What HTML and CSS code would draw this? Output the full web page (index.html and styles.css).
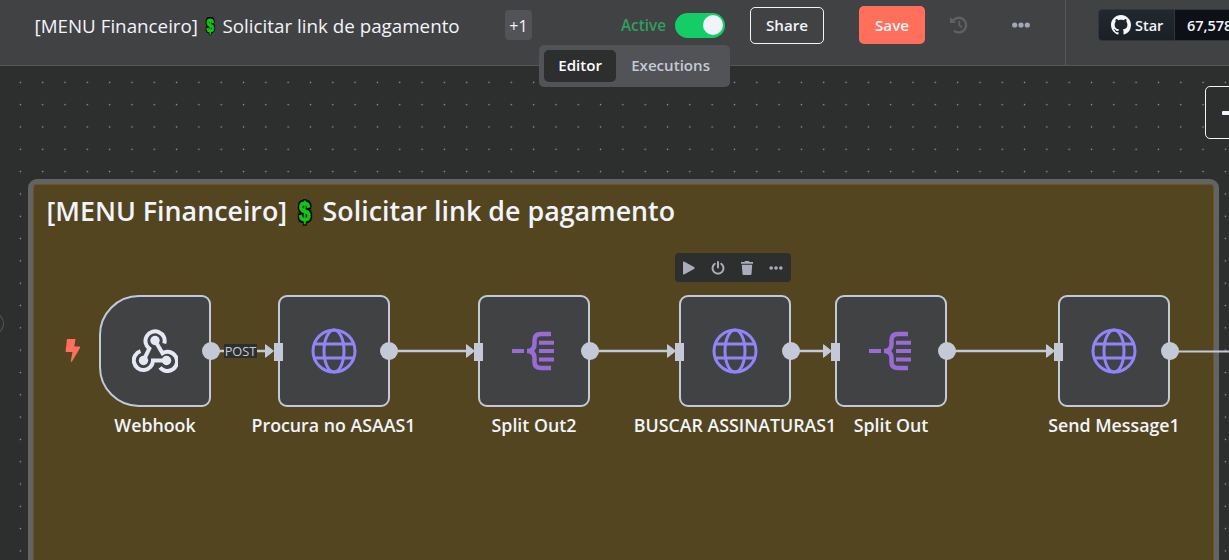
FILE: index.html
```html
<!DOCTYPE html>
<html lang="pt-BR">
<head>
<meta charset="utf-8">
<title>[MENU Financeiro] Solicitar link de pagamento</title>
<link rel="stylesheet" href="styles.css">
</head>
<body>
<svg class="defs" width="0" height="0" aria-hidden="true">
  <symbol id="globe" viewBox="0 0 46 46"><g fill="none" stroke="#9184f7" stroke-width="3"><circle cx="23" cy="23" r="21"/><ellipse cx="23" cy="23" rx="10" ry="21"/><path d="M3.5 16h39M3.5 30h39"/></g></symbol>
  <symbol id="split" viewBox="0 0 44 40"><g fill="none" stroke="#9b6bd5" stroke-width="4"><path d="M1 20h12M28 11.7h15M28 20h15M28 28.500h15"/><path d="M40 3H30Q23.500 3 23.500 9V13Q23.500 20 16 20Q23.500 20 23.500 27V31Q23.500 37 30 37H40" stroke-width="4.500"/></g></symbol>
  <symbol id="webhook" viewBox="0 0 46 44"><g fill="none" stroke="#e6e9f4" stroke-width="4"><path d="M32.300 14.500A9.600 9.600 0 1 0 17.300 19.600L11.500 31.500"/><path d="M8.500 22.200A9.600 9.600 0 1 0 21 31.500H34.500"/><path d="M23 11.500L30.500 24.200A9.600 9.600 0 1 1 28 38.500"/></g><g fill="#e6e9f4"><circle cx="23" cy="11.500" r="4.700"/><circle cx="11.500" cy="31.500" r="4.700"/><circle cx="34.500" cy="31.500" r="4.700"/></g></symbol>
</svg>
<header class="topbar">
  <div class="title">[MENU Financeiro]<span class="dollar">$</span>Solicitar link de pagamento</div>
  <span class="tag">+1</span>
  <span class="active">Active</span>
  <span class="toggle"><i></i></span>
  <button class="btn share">Share</button>
  <button class="btn save">Save</button>
  <svg class="history" width="18" height="18" viewBox="0 0 18 18" fill="none" stroke="#606164" stroke-width="2.400"><path d="M2.500 5.500A7.300 7.300 0 1 1 4 14.600"/><path d="M9.300 4.800V9.300L12 11.200" stroke-width="1.800"/><path d="M0 1V7H6Z" fill="#606164" stroke="none"/></svg>
  <svg class="more" width="18" height="6" viewBox="0 0 18 6" fill="#a3a8b7"><circle cx="2.700" cy="3" r="2.600"/><circle cx="9" cy="3" r="2.600"/><circle cx="15.300" cy="3" r="2.600"/></svg>
  <div class="github">
    <span class="star"><svg width="20" height="20" viewBox="0 0 16 16" fill="#f5f7fc"><path d="M8 0C3.580 0 0 3.580 0 8c0 3.540 2.290 6.530 5.470 7.590.4.070.55-.17.55-.38 0-.19-.01-.82-.01-1.490-2.010.37-2.530-.49-2.690-.94-.09-.23-.48-.94-.82-1.130-.28-.15-.68-.52-.01-.53.63-.01 1.080.58 1.230.82.72 1.210 1.870.87 2.330.66.070-.52.28-.87.51-1.070-1.780-.2-3.640-.89-3.640-3.950 0-.87.31-1.590.82-2.150-.08-.2-.36-1.020.08-2.120 0 0 .67-.21 2.200.82.64-.18 1.320-.27 2-.27s1.360.09 2 .27c1.530-1.040 2.200-.82 2.200-.82.44 1.100.16 1.920.08 2.120.51.56.82 1.270.82 2.150 0 3.070-1.870 3.750-3.650 3.950.29.25.54.73.54 1.480 0 1.070-.01 1.930-.01 2.200 0 .21.15.46.55.38A8.010 8.010 0 0 0 16 8c0-4.420-3.580-8-8-8Z"/></svg>Star</span><span class="count">67,578</span>
  </div>
</header>
<nav class="tabs"><span class="tab on">Editor</span><span class="tab">Executions</span></nav>
<main class="canvas">
  <svg class="dots" width="1229" height="560"><defs><pattern id="grid" x="9.200" y="71.200" width="22.315" height="22.315" patternUnits="userSpaceOnUse"><circle cx="11.200" cy="11.200" r="0.750" fill="#a2a4a5"/></pattern></defs><rect width="1229" height="560" fill="url(#grid)"/></svg>
  <button class="add"><i></i></button>
  <i class="handle"></i>
  <section class="sticky"><h2>[MENU Financeiro]<span class="dollar">$</span>Solicitar link de pagamento</h2></section>
  <svg class="wires" width="1229" height="560"><g stroke="#c4c9d7" stroke-width="2.300"><path d="M211 351H270M389 351H470M590 351H671M791 351H827M947 351H1050"/><path d="M1170 351.500H1229" stroke-width="2"/></g><g fill="#c4c9d7" stroke="#c4c9d7" stroke-linejoin="round"><path id="arrow" d="M265.500 344.700V357.300L273.500 351Z"/><use href="#arrow" x="201"/><use href="#arrow" x="402"/><use href="#arrow" x="558"/><use href="#arrow" x="781"/></g></svg>
  <span class="method">POST</span>
  <svg class="bolt" width="16" height="25" viewBox="0 0 16 25"><path d="M2 1H10.500L9.300 8.500H14.500Q15.800 8.500 15 10L7 23.500Q5.600 24.500 5.800 23L7.500 14H1.500Q.5 14 .6 13Z" fill="#ff6f5c"/></svg>
  <article class="node trigger" style="left:99px"><svg width="46" height="44"><use href="#webhook"/></svg><i class="out"></i><label>Webhook</label></article>
  <article class="node" style="left:277.500px"><i class="in"></i><svg width="46" height="46"><use href="#globe"/></svg><i class="out"></i><label>Procura no ASAAS1</label></article>
  <article class="node" style="left:478px"><i class="in"></i><svg class="split" width="44" height="40"><use href="#split"/></svg><i class="out"></i><label>Split Out2</label></article>
  <article class="node" style="left:679px"><i class="in"></i><svg width="46" height="46"><use href="#globe"/></svg><i class="out"></i><label>BUSCAR ASSINATURAS1</label></article>
  <article class="node" style="left:835px"><i class="in"></i><svg class="split" width="44" height="40"><use href="#split"/></svg><i class="out"></i><label>Split Out</label></article>
  <article class="node" style="left:1058px"><i class="in"></i><svg width="46" height="46"><use href="#globe"/></svg><i class="out"></i><label>Send Message1</label></article>
  <div class="tools">
    <svg width="14" height="14" viewBox="0 0 14 14"><path d="M1 1.500Q1 0 2.500.8L12 6Q13.500 7 12 8L2.500 13.200Q1 14 1 12.500Z"/></svg>
    <svg width="14" height="14" viewBox="0 0 14 14" fill="none" stroke="#a9adb9" stroke-width="2" stroke-linecap="round"><path d="M3.800 2.800A5.500 5.500 0 1 0 10.200 2.800M7 1V6.500"/></svg>
    <svg width="14" height="14" viewBox="0 0 14 14"><path d="M1 1H4.500L5 0H9L9.500 1H13V2.700H1ZM1.800 3.700H12.200L11.500 13Q11.400 14 10.500 14H3.500Q2.600 14 2.500 13Z"/></svg>
    <svg width="14" height="14" viewBox="0 0 14 14"><circle cx="2.200" cy="7" r="1.800"/><circle cx="7" cy="7" r="1.800"/><circle cx="11.800" cy="7" r="1.800"/></svg>
  </div>
</main>
</body>
</html>
```
FILE: styles.css
```css
* { box-sizing: border-box; }
body { margin: 0; width: 1229px; height: 560px; overflow: hidden; position: relative; background: #2d2e2e; color: #f2f4fb; font-family: "Open Sans", "Noto Sans", sans-serif; }
button { font: inherit; color: inherit; padding: 0; }
.defs { position: absolute; }
.topbar { display: flex; align-items: center; height: 66px; padding: 0 0 15px 34px; background: #414244; border-bottom: 1px solid #555658; white-space: nowrap; position: relative; }
.topbar > * { flex: none; }
.title { width: 471px; font-size: 18.800px; line-height: 30px; padding: 2px 0 0 .5px; display: flex; align-items: center; }
.dollar { display: inline-block; width: 24.500px; text-align: center; color: #13c813; font-family: "Liberation Sans", sans-serif; font-weight: 700; font-size: 16px; line-height: 1; -webkit-text-stroke: .7px #13c813; text-shadow: 1.3px 0 #000, -1.3px 0 #000, 0 1.300px #000, 0 -1.300px #000, 1px 1px #000, -1px 1px #000, 1px -1px #000, -1px -1px #000; transform: scale(.85, 1.12); }
.tag { width: 27px; height: 30px; border-radius: 4px; background: #525356; font-size: 16px; line-height: 32px; text-align: center; }
.active { margin-left: 89px; width: 54px; color: #2f9e62; font-size: 15.300px; font-weight: 600; }
.toggle { width: 50px; height: 25px; border-radius: 13px; background: #13ce66; padding: 2px; display: flex; justify-content: flex-end; }
.toggle i { width: 20px; height: 20px; border-radius: 50%; background: #f1f3fb; }
.btn { border-radius: 5px; font-weight: 650; font-size: 15.200px; }
.share { margin-left: 25px; width: 74px; height: 37px; border: 1px solid #f2f4fb; background: transparent; }
.save { margin-left: 35px; width: 66px; height: 38px; border: 0; background: #ff6f5c; }
.history { margin-left: 25px; }
.more { margin-left: 43.500px; }
.github { align-self: flex-start; display: flex; height: 65px; margin-left: 35.500px; padding: 9px 0 0 32px; border-left: 1px solid #555658; font-size: 14.500px; font-weight: 600; }
.star, .count { height: 32px; display: flex; align-items: center; border: 1px solid #30363d; }
.star { width: 77px; gap: 4px; padding-left: 12px; background: linear-gradient(#21282f, #1b2026); border-radius: 4px 0 0 4px; }
.count { width: 76px; padding-left: 12px; background: #0d1017; border-left: 0; }
.tabs { position: absolute; z-index: 3; left: 539px; top: 45px; width: 191px; height: 42px; padding: 5px; display: flex; border-radius: 5px; background: #525356; color: #c4c9d7; font-size: 15.100px; font-weight: 600; }
.tab { width: 110px; line-height: 30px; text-align: center; }
.tab.on { width: 73px; height: 32px; border-radius: 5px; background: #2d2e2e; color: #fff; }
.dots, .wires { position: absolute; left: 0; top: 0; }
.dots { clip-path: inset(67px 0 0 0); }
.add { position: absolute; left: 1205px; top: 86px; width: 53px; height: 53px; border: 1px solid #f2f4fb; border-radius: 5px; background: #2d2e2e; display: flex; align-items: center; padding-left: 16px; }
.add i { width: 20px; height: 4px; border-radius: 1px; background: #f2f4fb; }
.handle { position: absolute; left: -16px; top: 313px; width: 20px; height: 21px; border: 1px solid #555658; border-radius: 50%; }
.sticky { position: absolute; left: 28px; top: 179px; width: 1191px; height: 400px; border: 5px solid #636363; border-radius: 9px; background: #524520; box-shadow: inset 0 0 0 1px #6d551e; padding: 10px 13.500px; }
.sticky h2 { display: flex; align-items: center; margin: 0; font-size: 26.800px; font-weight: 600; line-height: 34px; white-space: nowrap; }
.sticky .dollar { width: 35.500px; font-size: 25px; text-shadow: 2px 0 #000, -2px 0 #000, 0 2px #000, 0 -2px #000, 1.5px 1.500px #000, -1.5px 1.500px #000, 1.5px -1.500px #000, -1.5px -1.500px #000; transform: scale(.85, 1.12); }
.method { position: absolute; left: 224px; top: 344px; width: 33px; height: 14px; background: #2d2e2e; color: #c4c9d7; font-size: 12.800px; line-height: 15px; text-align: center; }
.bolt { position: absolute; left: 65px; top: 338px; }
.node { position: absolute; top: 295px; width: 112px; height: 112px; border: 2px solid #c4c9d7; border-radius: 9px; background: #414244; display: flex; align-items: center; justify-content: center; }
.trigger { border-radius: 40px 9px 9px 40px; }
.split { margin-right: 2px; }
.in { position: absolute; left: -6px; top: 46px; width: 9px; height: 18px; background: #c4c9d7; }
.out { position: absolute; right: -10.500px; top: 45.300px; width: 18px; height: 18px; border-radius: 50%; background: #c4c9d7; }
.node label { position: absolute; top: 116px; left: 50%; transform: translateX(-50%); font-size: 17.800px; line-height: 24px; font-weight: 600; white-space: nowrap; }
.tools { position: absolute; left: 675px; top: 253px; width: 116px; height: 29px; border-radius: 4px; background: #2d2e2e; display: flex; align-items: center; justify-content: space-between; padding: 0 8px 0 7px; fill: #a9adb9; }
```
